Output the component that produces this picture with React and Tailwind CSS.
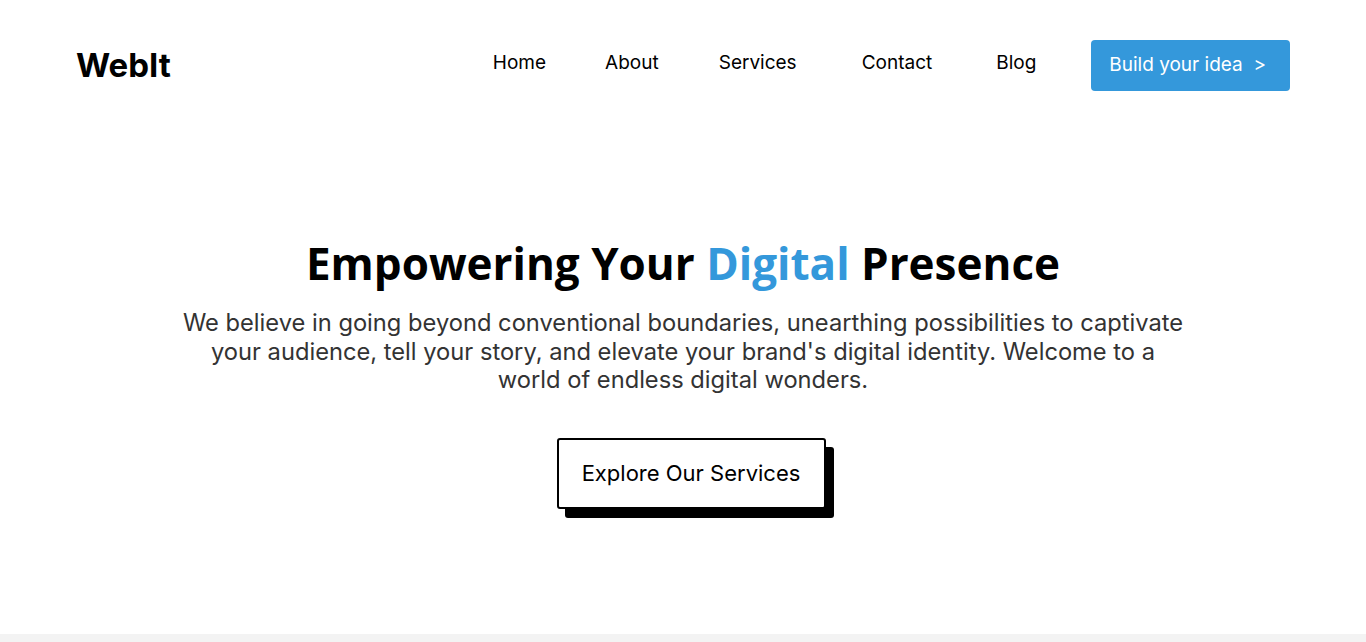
import React from 'react';

const links = [
  { label: 'Home', gap: 'mr-[59px]' },
  { label: 'About', gap: 'mr-[60px]' },
  { label: 'Services', gap: 'mr-[65px]' },
  { label: 'Contact', gap: 'mr-[64px]' },
  { label: 'Blog', gap: 'mr-[55px]' },
];

const App = () => {
  return (
    <div className="min-h-screen bg-white" style={{ fontFamily: 'Inter, "Liberation Sans", sans-serif' }}>
      {/* header */}
      <header className="flex items-center justify-between px-[76px] pt-[40px] h-[92px]">
        <div className="text-[33px] font-bold text-black leading-none -mt-[1px]">WebIt</div>
        <nav className="flex items-center">
          <ul className="flex items-center -mt-[5px]">
            {links.map((l) => (
              <li key={l.label} className={`text-[19px] text-black ${l.gap}`}>
                {l.label}
              </li>
            ))}
          </ul>
          <button className="h-[51px] pl-[18px] pr-[24px] rounded-[4px] bg-[#3498db] text-white text-[19px] -mt-[2px]">
            Build your idea &nbsp;&gt;
          </button>
        </nav>
      </header>

      {/* hero */}
      <main className="flex flex-col items-center pt-[145px] h-[542px]">
        <h1
          className="text-[44px] font-bold text-black leading-[52px]"
          style={{ fontFamily: '"Open Sans", sans-serif' }}
        >
          Empowering Your <span className="text-[#3498db]">Digital</span> Presence
        </h1>
        <p className="mt-[20px] w-[1006px] text-center text-[23.7px] leading-[28.5px] text-[#333]">
          We believe in going beyond conventional boundaries, unearthing possibilities to captivate your audience, tell your story, and elevate your brand's digital identity. Welcome to a world of endless digital wonders.
        </p>
        <button className="mt-[43px] ml-[16px] w-[269px] h-[71px] border-2 border-black rounded-[3px] bg-white text-black text-[22px] shadow-[8px_9px_0_0_#000]">
          Explore Our Services
        </button>
      </main>
      <div className="h-[20px] bg-[#f3f3f3]" />
    </div>
  );
};

export default App;
